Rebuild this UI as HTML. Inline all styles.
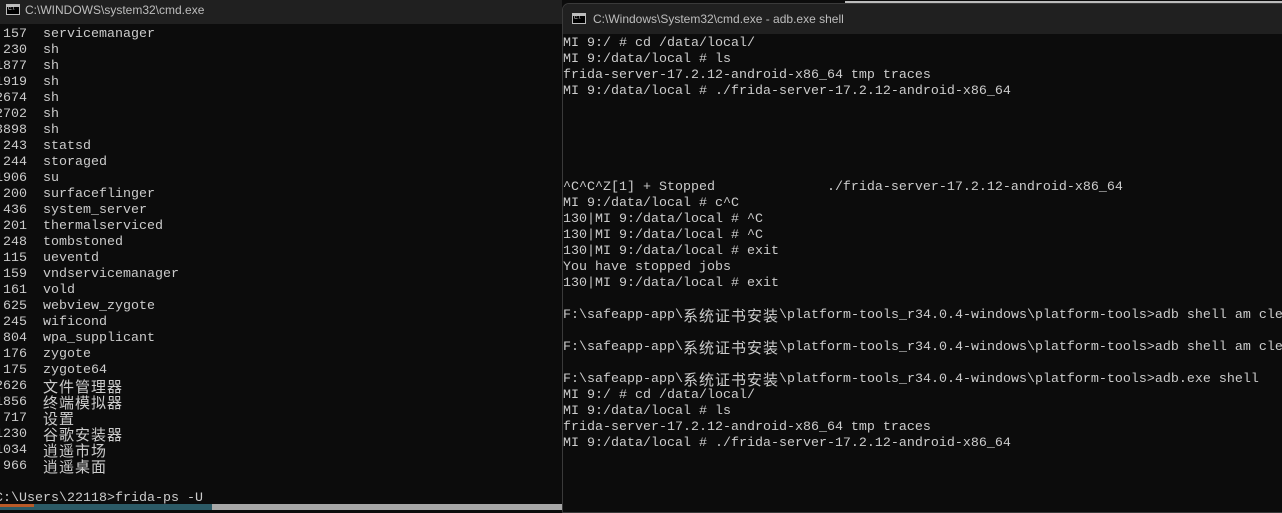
<!DOCTYPE html>
<html><head><meta charset="utf-8"><style>
*{margin:0;padding:0;box-sizing:border-box}
body{width:1282px;height:510px;overflow:hidden;background:#0c0c0c;position:relative;font-family:"Liberation Mono","Noto Sans CJK SC",monospace;color:#cccccc}
.win{position:absolute;background:#0c0c0c;overflow:hidden}
.tb{position:absolute;left:0;right:0;top:0;background:#202020;font-family:"Liberation Sans",sans-serif;font-size:12px;color:#bdbdbd}
.tb span{position:absolute;top:50%;transform:translateY(-50%)}
.ic{position:absolute;width:14px;height:11px;border:1px solid #bbb;background:#000}
.ic:before{content:"";position:absolute;left:0;right:0;top:0;height:2px;background:#bbb}
.ic:after{content:"c:\\";position:absolute;left:1px;top:1px;font-size:6px;color:#ddd;font-family:"Liberation Sans",sans-serif}
.l{height:16px;line-height:16px;font-size:13.33px;white-space:pre;overflow:hidden}
.c{font-family:"Noto Sans CJK SC",sans-serif;font-size:15px;letter-spacing:1px;line-height:15px;display:inline-block;vertical-align:top;height:16px}
</style></head><body>
<div class="win" style="left:0;top:0;width:562px;height:504px">
 <div class="tb" style="height:24px"><div class="ic" style="left:6px;top:4px"></div><span style="left:25px;top:10px">C:\WINDOWS\system32\cmd.exe</span></div>
 <div style="position:absolute;left:-5px;top:27px;width:570px">
<div class="l"> 157  servicemanager</div>
<div class="l"> 230  sh</div>
<div class="l">1877  sh</div>
<div class="l">1919  sh</div>
<div class="l">2674  sh</div>
<div class="l">2702  sh</div>
<div class="l">3898  sh</div>
<div class="l"> 243  statsd</div>
<div class="l"> 244  storaged</div>
<div class="l">1906  su</div>
<div class="l"> 200  surfaceflinger</div>
<div class="l"> 436  system_server</div>
<div class="l"> 201  thermalserviced</div>
<div class="l"> 248  tombstoned</div>
<div class="l"> 115  ueventd</div>
<div class="l"> 159  vndservicemanager</div>
<div class="l"> 161  vold</div>
<div class="l"> 625  webview_zygote</div>
<div class="l"> 245  wificond</div>
<div class="l"> 804  wpa_supplicant</div>
<div class="l"> 176  zygote</div>
<div class="l"> 175  zygote64</div>
<div class="l">2626  <span class="c">文件管理器</span></div>
<div class="l">1856  <span class="c">终端模拟器</span></div>
<div class="l"> 717  <span class="c">设置</span></div>
<div class="l">1230  <span class="c">谷歌安装器</span></div>
<div class="l">1034  <span class="c">逍遥市场</span></div>
<div class="l"> 966  <span class="c">逍遥桌面</span></div>
<div class="l"> </div>
<div class="l">C:\Users\22118&gt;frida-ps -U</div>
 </div>
</div>
<div style="position:absolute;left:0;top:504px;width:212px;height:6px;background:#2b5a66"></div>
<div style="position:absolute;left:0;top:504px;width:34px;height:3px;background:#b85a28"></div>
<div style="position:absolute;left:212px;top:504px;width:350px;height:6px;background:#a8a8a8"></div>
<div style="position:absolute;left:845px;top:1px;width:437px;height:2px;background:#bcbcbc"></div>
<div class="win" style="left:562px;top:3px;width:722px;height:510px;border:1px solid #3a3a3a;border-radius:7px 0 0 0">
 <div class="tb" style="height:30px"><div class="ic" style="left:9px;top:9px"></div><span style="left:30px">C:\Windows\System32\cmd.exe - adb.exe  shell</span></div>
 <div style="position:absolute;left:0;top:32px;width:730px">
<div class="l">MI 9:/ # cd /data/local/</div>
<div class="l">MI 9:/data/local # ls</div>
<div class="l">frida-server-17.2.12-android-x86_64 tmp traces</div>
<div class="l">MI 9:/data/local # ./frida-server-17.2.12-android-x86_64</div>
<div class="l"> </div>
<div class="l"> </div>
<div class="l"> </div>
<div class="l"> </div>
<div class="l"> </div>
<div class="l">^C^C^Z[1] + Stopped              ./frida-server-17.2.12-android-x86_64</div>
<div class="l">MI 9:/data/local # c^C</div>
<div class="l">130|MI 9:/data/local # ^C</div>
<div class="l">130|MI 9:/data/local # ^C</div>
<div class="l">130|MI 9:/data/local # exit</div>
<div class="l">You have stopped jobs</div>
<div class="l">130|MI 9:/data/local # exit</div>
<div class="l"> </div>
<div class="l">F:\safeapp-app\<span class="c">系统证书安装</span>\platform-tools_r34.0.4-windows\platform-tools&gt;adb shell am clear</div>
<div class="l"> </div>
<div class="l">F:\safeapp-app\<span class="c">系统证书安装</span>\platform-tools_r34.0.4-windows\platform-tools&gt;adb shell am clear</div>
<div class="l"> </div>
<div class="l">F:\safeapp-app\<span class="c">系统证书安装</span>\platform-tools_r34.0.4-windows\platform-tools&gt;adb.exe shell</div>
<div class="l">MI 9:/ # cd /data/local/</div>
<div class="l">MI 9:/data/local # ls</div>
<div class="l">frida-server-17.2.12-android-x86_64 tmp traces</div>
<div class="l">MI 9:/data/local # ./frida-server-17.2.12-android-x86_64</div>
 </div>
</div>
</body></html>
